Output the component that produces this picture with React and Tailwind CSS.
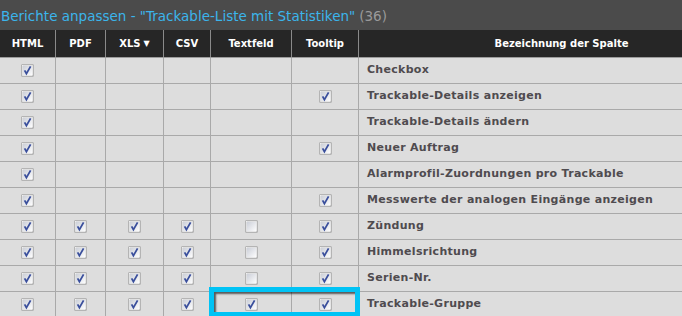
import React from "react";

const cols = [
  { label: "HTML", w: "w-[56px]" },
  { label: "PDF", w: "w-[50px]" },
  { label: "XLS", w: "w-[58px]", arrow: true },
  { label: "CSV", w: "w-[47px]" },
  { label: "Textfeld", w: "w-[81px]" },
  { label: "Tooltip", w: "w-[67px]" },
];

// 1 = checked, 0 = leer, null = keine checkbox
const rows = [
  { name: "Checkbox", v: [1, null, null, null, null, null] },
  { name: "Trackable-Details anzeigen", v: [1, null, null, null, null, 1] },
  { name: "Trackable-Details ändern", v: [1, null, null, null, null, null] },
  { name: "Neuer Auftrag", v: [1, null, null, null, null, 1] },
  { name: "Alarmprofil-Zuordnungen pro Trackable", v: [1, null, null, null, null, null] },
  { name: "Messwerte der analogen Eingänge anzeigen", v: [1, null, null, null, null, 1] },
  { name: "Zündung", v: [1, 1, 1, 1, 0, 1] },
  { name: "Himmelsrichtung", v: [1, 1, 1, 1, 0, 1] },
  { name: "Serien-Nr.", v: [1, 1, 1, 1, 0, 1] },
  { name: "Trackable-Gruppe", v: [1, 1, 1, 1, 1, 1] },
];

const Box = ({ checked }) => (
  <svg width="13" height="13" viewBox="0 0 13 13">
    <defs>
      <linearGradient id="cbg" x1="0" y1="0" x2="1" y2="1">
        <stop offset="0" stopColor="#c9cdd6" />
        <stop offset="1" stopColor="#ffffff" />
      </linearGradient>
    </defs>
    <rect x="0.5" y="0.5" width="12" height="12" fill="#8c8c8c" />
    <rect x="1.5" y="1.5" width="10" height="10" fill="url(#cbg)" stroke="#ffffff" strokeWidth="0.6" />
    {checked && (
      <path
        d="M3.6 6.4 L5.4 9.6 L9.6 2.4"
        fill="none"
        stroke="#3a4f9c"
        strokeWidth="1.8"
        strokeLinejoin="miter"
      />
    )}
  </svg>
);

export default function App() {
  return (
    <div
      className="w-[682px] h-[316px] overflow-hidden bg-[#dddddd]"
      style={{ fontFamily: '"DejaVu Sans", Verdana, sans-serif' }}
    >
      {/* Titelleiste */}
      <div className="h-[30px] bg-[#4b4b4b] flex items-center pl-[1px] pt-[3px] text-[13.5px] whitespace-nowrap">
        <span className="text-[#3bb5ec]">
          Berichte anpassen - "Trackable-Liste mit Statistiken"
        </span>
        <span className="text-[#9a9a9a] ml-[4px]">(36)</span>
      </div>

      <div className="relative w-[764px]">
        {/* Kopfzeile */}
        <div className="flex h-[28px] bg-[#262626] text-white font-bold text-[10px] border-b border-[#9c9c9c]">
          {cols.map((c) => (
            <div
              key={c.label}
              className={`${c.w} shrink-0 flex items-center justify-center border-r border-[#8a8a8a]`}
            >
              {c.label}
              {c.arrow && <span className="ml-[3px] text-[8px]">▼</span>}
            </div>
          ))}
          <div className="flex-1 flex items-center justify-center">Bezeichnung der Spalte</div>
        </div>

        {/* Zeilen */}
        {rows.map((r) => (
          <div key={r.name} className="flex h-[26px] border-b border-[#a9a9a9]">
            {r.v.map((val, i) => (
              <div
                key={i}
                className={`${cols[i].w} shrink-0 flex items-center justify-center border-r border-[#a9a9a9]`}
              >
                {val !== null && <Box checked={val === 1} />}
              </div>
            ))}
            <div className="flex-1 flex items-center pl-[8px] text-[11px] tracking-[0.3px] font-bold text-[#4f4b4f] whitespace-nowrap">
              {r.name}
            </div>
          </div>
        ))}

        {/* Markierung */}
        <div className="absolute left-[209px] top-[257px] w-[151px] h-[29px] border-[5px] border-b-4 border-[#00c3f5] shadow-[inset_2px_2px_2px_rgba(0,0,0,0.6)]" />
      </div>
    </div>
  );
}
